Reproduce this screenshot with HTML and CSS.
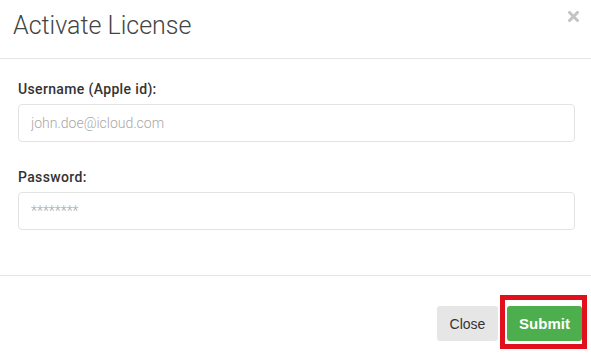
FILE: index.html
```html
<!DOCTYPE html>
<html>
<head>
<meta charset="utf-8">
<link rel="stylesheet" href="styles.css">
</head>
<body>
<div class="modal">
  <div class="modal-header">
    <h4 class="title">Activate License</h4>
    <button class="close" aria-label="Close">
      <svg width="11" height="11" viewBox="0 0 11 11"><path d="M1.5 1.5 L9.5 9.5 M9.5 1.5 L1.5 9.5" stroke="#c4c4c4" stroke-width="3" stroke-linecap="square"/></svg>
    </button>
  </div>
  <div class="modal-body">
    <div class="field">
      <label class="label">Username (Apple id):</label>
      <input class="input" type="text" placeholder="john.doe@icloud.com">
    </div>
    <div class="field">
      <label class="label">Password:</label>
      <input class="input" type="text" placeholder="********">
    </div>
  </div>
  <div class="modal-footer">
    <button class="btn btn-close">Close</button>
    <span class="highlight">
      <button class="btn btn-submit">Submit</button>
    </span>
  </div>
</div>
</body>
</html>
```

FILE: styles.css
```css
html, body {
  margin: 0;
  padding: 0;
  background: #fff;
}
body {
  font-family: Inter, Roboto, "Liberation Sans", sans-serif;
  color: #333;
}
.modal {
  width: 591px;
  height: 361px;
  background: #fff;
}
.modal-header {
  height: 58px;
  border-bottom: 1px solid #e5e5e5;
  display: flex;
  align-items: flex-start;
  justify-content: space-between;
  box-sizing: content-box;
}
.title {
  margin: 0;
  padding: 11px 0 0 13px;
  font-family: Roboto, sans-serif;
  font-weight: 300;
  font-size: 25px;
  line-height: 30px;
  color: #444;
}
.close {
  background: none;
  border: 0;
  padding: 0;
  margin: 11px 12px 0 0;
  width: 11px;
  height: 11px;
  display: flex;
}
.modal-body {
  padding: 20px 16px 45px 18px;
  display: flex;
  flex-direction: column;
  gap: 25px;
}
.field {
  display: flex;
  flex-direction: column;
  gap: 5px;
}
.label {
  font-family: Roboto, sans-serif;
  font-weight: 500;
  font-size: 14px;
  line-height: 20px;
  letter-spacing: 0.35px;
  color: #333;
}
.input {
  box-sizing: border-box;
  height: 38px;
  width: 100%;
  border: 1px solid #e3e3e3;
  border-radius: 4px;
  padding: 0 12px;
  font-family: Roboto, sans-serif;
  font-weight: 300;
  font-size: 14px;
  color: #333;
  outline: none;
}
.input::placeholder {
  color: #a8a8a8;
}
.modal-footer {
  border-top: 1px solid #e5e5e5;
  padding: 30px 9px 0 0;
  display: flex;
  justify-content: flex-end;
  align-items: flex-start;
  gap: 9px;
}
.btn {
  height: 35px;
  border: 0;
  border-radius: 3px;
  font-family: "Liberation Sans", Arial, sans-serif;
  font-size: 14px;
  padding: 0;
}
.btn-close {
  width: 61px;
  background: #e6e6e6;
  color: #333;
}
.btn-submit {
  width: 75px;
  background: #4cae4c;
  color: #fff;
  font-weight: bold;
  font-size: 15px;
  display: block;
}
.highlight {
  position: relative;
  display: block;
}
.highlight::after {
  content: "";
  position: absolute;
  top: -11px;
  bottom: -8px;
  left: -7px;
  right: -5px;
  border: 5px solid #e0101c;
  pointer-events: none;
}
```
